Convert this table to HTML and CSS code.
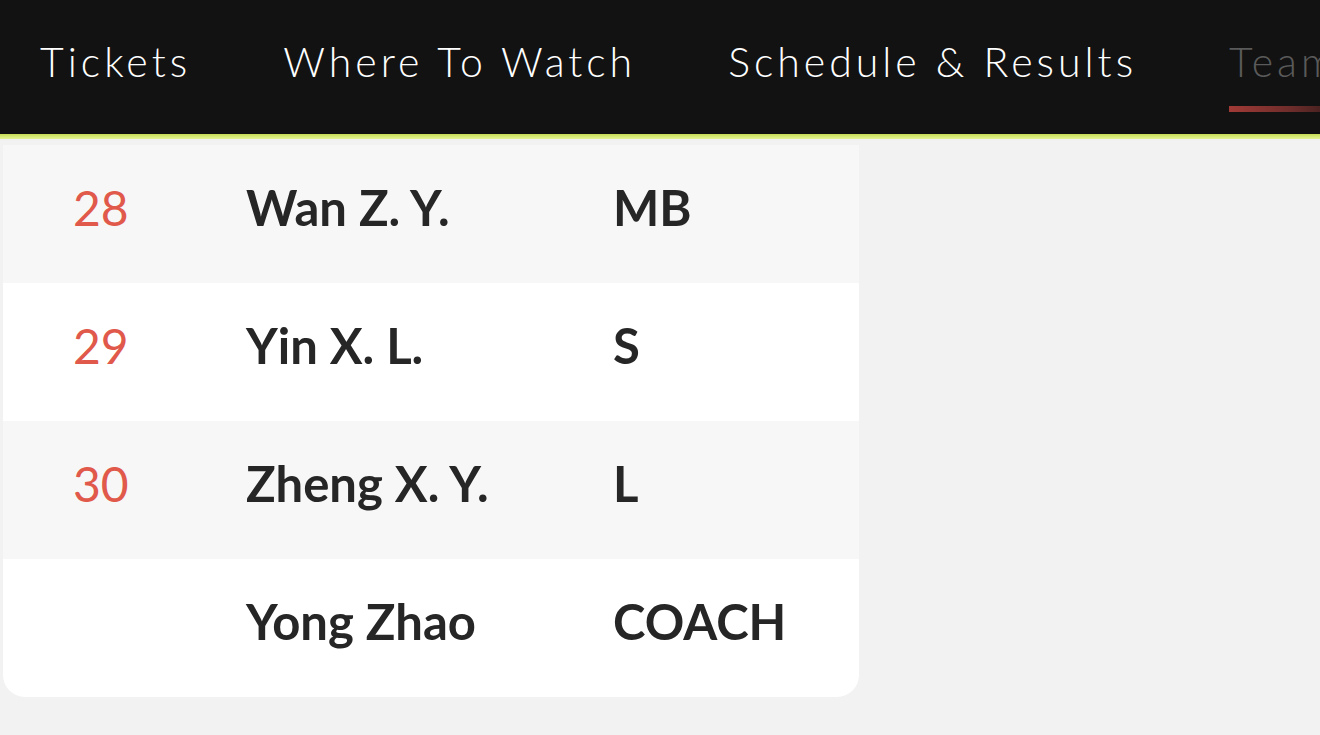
FILE: index.html
```html
<!DOCTYPE html>
<html lang="en">
<head>
    <meta charset="UTF-8">
    <meta name="viewport" content="width=device-width, initial-scale=1.0">
    <title>Roster</title>
    <link rel="stylesheet" href="styles.css">
</head>
<body>
    <header class="topbar">
        <nav class="nav">
            <a href="#" class="nav-link">Tickets</a>
            <a href="#" class="nav-link">Where To Watch</a>
            <a href="#" class="nav-link">Schedule &amp; Results</a>
            <a href="#" class="nav-link active">Team</a>
        </nav>
    </header>
    <div class="accent-line"></div>

    <main class="page">
        <div class="roster">
            <div class="row">
                <span class="num">28</span>
                <span class="name">Wan Z. Y.</span>
                <span class="pos">MB</span>
            </div>
            <div class="row">
                <span class="num">29</span>
                <span class="name">Yin X. L.</span>
                <span class="pos">S</span>
            </div>
            <div class="row">
                <span class="num">30</span>
                <span class="name">Zheng X. Y.</span>
                <span class="pos">L</span>
            </div>
            <div class="row">
                <span class="num"></span>
                <span class="name">Yong Zhao</span>
                <span class="pos">COACH</span>
            </div>
        </div>
    </main>
</body>
</html>
```

FILE: styles.css
```css
body {
    margin: 0;
    padding: 0;
    background: #f2f2f2;
    font-family: 'Lato', sans-serif;
    overflow: hidden;
}

.topbar {
    background: #121212;
    height: 134px;
    overflow: hidden;
}

.nav {
    display: flex;
    gap: 92px;
    padding-left: 40px;
    white-space: nowrap;
}

.nav-link {
    position: relative;
    color: #ffffff;
    text-decoration: none;
    font-family: 'Lato', sans-serif;
    font-weight: 300;
    font-size: 41px;
    letter-spacing: 4px;
    line-height: 1;
    padding-top: 41px;
}

.nav-link.active {
    color: #5a5a5a;
}

.nav-link.active::after {
    content: "";
    position: absolute;
    left: 0;
    top: 106px;
    width: 130px;
    height: 6px;
    background: linear-gradient(to right, #a13a36, #6a2c2a 50%, #1c1514);
}

.accent-line {
    height: 5px;
    background: linear-gradient(to bottom, #c6dc55, #e6f494);
}

.page {
    padding: 6px 0 0 3px;
}

.roster {
    width: 856px;
    background: #ffffff;
    border-radius: 0 0 22px 22px;
    overflow: hidden;
}

.row {
    display: grid;
    grid-template-columns: 173px 367px 1fr;
    align-items: center;
    height: 138px;
    padding-left: 70px;
    padding-bottom: 14px;
    box-sizing: border-box;
    color: #262626;
}

.row:nth-child(odd) {
    background: #f7f7f7;
}

.num {
    color: #e0594b;
    font-weight: 400;
    font-size: 48px;
}

.name,
.pos {
    font-weight: 700;
    font-size: 49px;
}
```
